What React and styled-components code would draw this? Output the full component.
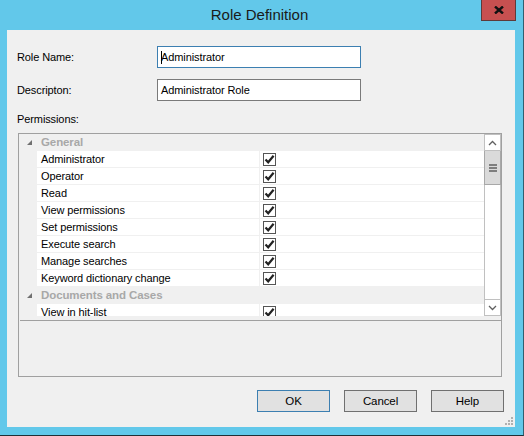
import React from 'react'
import styled, { createGlobalStyle } from 'styled-components'

const GlobalStyle = createGlobalStyle`
    html, body {
        margin: 0;
        padding: 0;
        background: #62c8ea;
    }
    body {
        font-family: "Liberation Sans", Arial, sans-serif;
        font-size: 11px;
        letter-spacing: -0.1px;
        color: #000;
    }
`;

// Window chrome
const Window = styled.div`
    width: 524px;
    height: 436px;
    box-sizing: border-box;
    background: #62c8ea;
    border-right: 1px solid #2f5f70;
    border-bottom: 1px solid #1f2f36;
    display: flex;
    flex-direction: column;
`;
const TitleBar = styled.div`
    height: 30px;
    display: grid;
    grid-template-columns: 1fr auto 1fr;
    align-items: start;
`;
const Title = styled.div`
    grid-column: 2;
    font-size: 15px;
    letter-spacing: 0;
    color: #1a1a1a;
    padding-top: 6px;
    margin-left: -4px;
`;
const CloseButton = styled.div`
    grid-column: 3;
    justify-self: end;
    width: 33px;
    height: 20px;
    margin-right: 7px;
    background: #c75050;
    border: 1px solid #5e3a3a;
    border-top: none;
    display: flex;
    align-items: center;
    justify-content: center;
`;
const Client = styled.div`
    position: relative;
    flex: 1;
    margin: 0 8px 8px 7px;
    background: #f0f0f0;
    padding: 16px 0 0 10px;
    display: flex;
    flex-direction: column;
`;

// Form fields
const FieldRow = styled.div`
    display: flex;
    align-items: center;
    height: 22px;
    margin-bottom: ${props => props.gap || 0}px;
`;
const Label = styled.div`
    width: 140px;
`;
const TextBox = styled.div`
    width: 204px;
    height: 22px;
    box-sizing: border-box;
    border: 1px solid ${props => (props.focused ? '#3c7fb1' : '#7a7a7a')};
    background: #fff;
    padding: 4px 0 0 3px;
    white-space: nowrap;
`;
const Caret = styled.span`
    display: inline-block;
    width: 1px;
    height: 13px;
    background: #000;
    vertical-align: -3px;
    margin-right: -1px;
`;
const SectionLabel = styled.div`
    margin: 12px 0 6px 0;
    height: 14px;
`;

// Property grid
const GridFrame = styled.div`
    width: 484px;
    height: 244px;
    box-sizing: border-box;
    margin-left: 1px;
    border: 1px solid #a0a0a0;
    background: #f0f0f0;
    display: flex;
    flex-direction: column;
`;
const ListArea = styled.div`
    height: 182px;
    display: flex;
    background: #fff;
`;
const Rows = styled.div`
    flex: 1;
    overflow: hidden;
`;
const Row = styled.div`
    display: flex;
    height: 16px;
    border-bottom: 1px solid #f0f0f0;
    background: ${props => (props.category ? '#f0f0f0' : '#fff')};
`;
const Gutter = styled.div`
    width: 18px;
    background: #f0f0f0;
    display: flex;
    align-items: center;
    justify-content: center;
    padding-left: 2px;
    box-sizing: border-box;
`;
const NameCell = styled.div`
    width: 223px;
    padding-left: 4px;
    box-sizing: border-box;
    line-height: 17px;
    white-space: nowrap;
    border-right: 1px solid #f0f0f0;
`;
const CategoryName = styled.div`
    padding-left: 4px;
    line-height: 17px;
    font-size: 11.5px;
    font-weight: bold;
    color: #a8a8a8;
`;
const ValueCell = styled.div`
    flex: 1;
    display: flex;
    align-items: center;
    padding-left: 3px;
`;
const CheckBox = styled.div`
    width: 13px;
    height: 13px;
    box-sizing: border-box;
    border: 1px solid #555;
    background: #fff;
    display: flex;
    align-items: center;
    justify-content: center;
`;
const ScrollBar = styled.div`
    width: 17px;
    display: flex;
    flex-direction: column;
    background: #fff;
`;
const ScrollButton = styled.div`
    height: 17px;
    box-sizing: border-box;
    border: 1px solid #c0c0c0;
    display: flex;
    align-items: center;
    justify-content: center;
    background: #fff;
`;
const Thumb = styled.div`
    height: 34px;
    box-sizing: border-box;
    border: 1px solid #a8a8a8;
    border-top: none;
    background: #dadada;
    display: flex;
    align-items: center;
    justify-content: center;
`;
const Track = styled.div`
    flex: 1;
    border-left: 1px solid #c0c0c0;
    border-right: 1px solid #c0c0c0;
`;
const HelpPane = styled.div`
    flex: 1;
    margin: 4px 0 0 1px;
    border-top: 1px solid #a0a0a0;
`;

// Buttons
const ButtonBar = styled.div`
    display: flex;
    gap: 14px;
    margin: 13px 0 0 240px;
`;
const Button = styled.div`
    width: 73px;
    height: 22px;
    box-sizing: border-box;
    border: 1px solid ${props => (props.primary ? '#3c7fb1' : '#707070')};
    background: #e1e1e1;
    display: flex;
    align-items: center;
    justify-content: center;
    font-size: 11.5px;
`;
const Grip = styled.svg`
    position: absolute;
    right: 2px;
    bottom: 2px;
`;

const permissions = [
    { category: 'General' },
    { name: 'Administrator' },
    { name: 'Operator' },
    { name: 'Read' },
    { name: 'View permissions' },
    { name: 'Set permissions' },
    { name: 'Execute search' },
    { name: 'Manage searches' },
    { name: 'Keyword dictionary change' },
    { category: 'Documents and Cases' },
    { name: 'View in hit-list' },
];

const Check = () => (
    <svg width="11" height="11" viewBox="0 0 11 11">
        <path d="M1.5 5.5 L4.2 8.3 L9.6 1.8" fill="none" stroke="#222" strokeWidth="2.2" />
    </svg>
);

const Expander = () => (
    <svg width="5" height="5" viewBox="0 0 5 5">
        <polygon points="5,0 5,5 0,5" fill="#707070" />
    </svg>
);

export default function App() {
    return (
        <>
            <GlobalStyle />
            <Window>
                <TitleBar>
                    <Title>Role Definition</Title>
                    <CloseButton>
                        <svg width="10" height="8" viewBox="0 0 10 8">
                            <path d="M1 0.5 L9 7.5 M9 0.5 L1 7.5" stroke="#111" strokeWidth="2.4" />
                        </svg>
                    </CloseButton>
                </TitleBar>
                <Client>
                    <FieldRow gap={11}>
                        <Label>Role Name:</Label>
                        <TextBox focused><Caret />Administrator</TextBox>
                    </FieldRow>
                    <FieldRow>
                        <Label>Descripton:</Label>
                        <TextBox>Administrator Role</TextBox>
                    </FieldRow>
                    <SectionLabel>Permissions:</SectionLabel>
                    <GridFrame>
                        <ListArea>
                            <Rows>
                                {permissions.map((p, i) =>
                                    p.category ? (
                                        <Row key={i} category>
                                            <Gutter><Expander /></Gutter>
                                            <CategoryName>{p.category}</CategoryName>
                                        </Row>
                                    ) : (
                                        <Row key={i}>
                                            <Gutter />
                                            <NameCell>{p.name}</NameCell>
                                            <ValueCell>
                                                <CheckBox><Check /></CheckBox>
                                            </ValueCell>
                                        </Row>
                                    )
                                )}
                            </Rows>
                            <ScrollBar>
                                <ScrollButton>
                                    <svg width="9" height="6" viewBox="0 0 9 6">
                                        <path d="M1 5 L4.5 1.5 L8 5" fill="none" stroke="#606060" strokeWidth="1.3" />
                                    </svg>
                                </ScrollButton>
                                <Thumb>
                                    <svg width="8" height="8" viewBox="0 0 8 8">
                                        <path d="M0 1 H8 M0 4 H8 M0 7 H8" stroke="#606060" strokeWidth="1.6" />
                                    </svg>
                                </Thumb>
                                <Track />
                                <ScrollButton>
                                    <svg width="9" height="6" viewBox="0 0 9 6">
                                        <path d="M1 1 L4.5 4.5 L8 1" fill="none" stroke="#606060" strokeWidth="1.3" />
                                    </svg>
                                </ScrollButton>
                            </ScrollBar>
                        </ListArea>
                        <HelpPane />
                    </GridFrame>
                    <ButtonBar>
                        <Button primary>OK</Button>
                        <Button>Cancel</Button>
                        <Button>Help</Button>
                    </ButtonBar>
                    <Grip width="8" height="8" viewBox="0 0 8 8">
                        <g fill="#b0b0b0">
                            <rect x="6" y="0" width="2" height="2" />
                            <rect x="3" y="3" width="2" height="2" />
                            <rect x="6" y="3" width="2" height="2" />
                            <rect x="0" y="6" width="2" height="2" />
                            <rect x="3" y="6" width="2" height="2" />
                            <rect x="6" y="6" width="2" height="2" />
                        </g>
                    </Grip>
                </Client>
            </Window>
        </>
    )
}
